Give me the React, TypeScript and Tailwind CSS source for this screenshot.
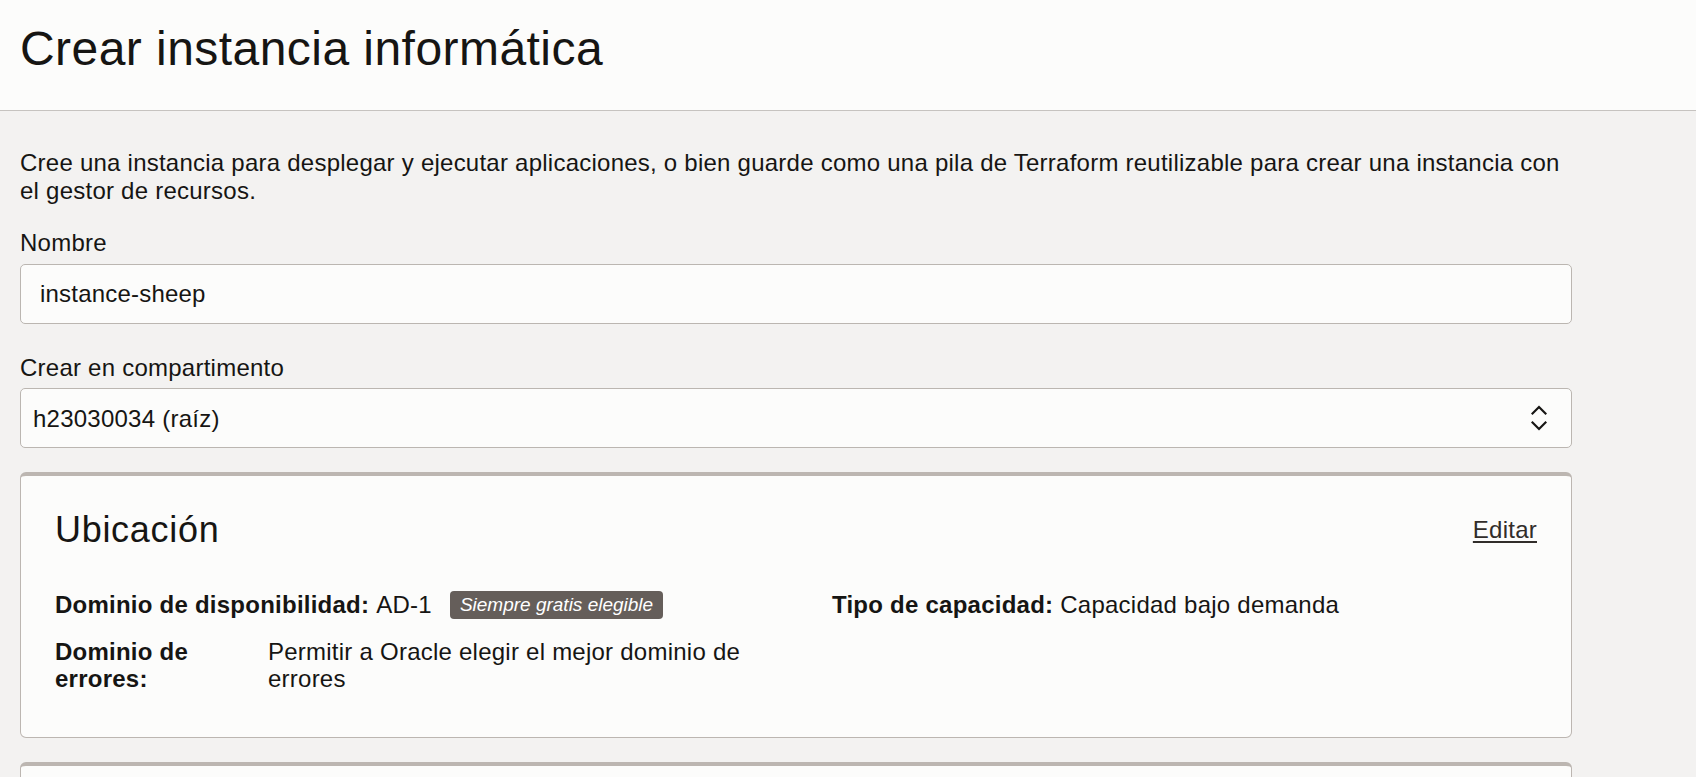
import type { ReactNode } from 'react';

const font = "font-['Liberation_Sans',Arial,sans-serif]";

function UpDownIcon() {
  return (
    <svg width="16" height="26" viewBox="0 0 16 26" fill="none" stroke="#161513" strokeWidth="2.2" strokeLinecap="square">
      <path d="M1.5 8.5 L8 2 L14.5 8.5" />
      <path d="M1.5 17.5 L8 24 L14.5 17.5" />
    </svg>
  );
}

function Field({ label, children, className = '' }: { label: string; children: ReactNode; className?: string }) {
  return (
    <div className={className}>
      <label className="block mb-[7px] text-[24px] leading-[27.6px]">{label}</label>
      {children}
    </div>
  );
}

export default function App() {
  return (
    <div className={`h-screen overflow-hidden bg-[#f3f2f1] text-[#161513] tracking-[0.24px] ${font}`}>
      {/* Header */}
      <header className="h-[111px] bg-[#fcfcfb] border-b border-[#c6c3c0] pt-[20px] px-[20px]">
        <h1 className="text-[48px] leading-[57.6px] font-normal tracking-[0.45px]">Crear instancia informática</h1>
      </header>

      <main className="pl-[20px] pr-[124px] pt-[38px]">
        <p className="text-[24px] leading-[27.6px]">
          Cree una instancia para desplegar y ejecutar aplicaciones, o bien guarde como una pila de Terraform reutilizable para crear una instancia con el gestor de recursos.
        </p>

        <Field label="Nombre" className="mt-[25px]">
          <input
            defaultValue="instance-sheep"
            readOnly
            className="block w-full h-[60px] rounded-[5px] border border-[#bbb6b1] bg-[#fcfcfb] pl-[19px] text-[24px] tracking-[0.2px] outline-none"
          />
        </Field>

        <Field label="Crear en compartimento" className="mt-[30px]">
          <div className="flex items-center justify-between h-[60px] rounded-[5px] border border-[#bbb6b1] bg-[#fcfcfb] pl-[12px] pr-[24px] text-[24px] leading-[27.6px]">
            <span>h23030034 (raíz)</span>
            <UpDownIcon />
          </div>
        </Field>

        {/* Ubicación */}
        <section className="mt-[24px] rounded-[6px] border border-t-4 border-[#bcb6b1] bg-[#fcfcfb] px-[34px] pt-[32px] pb-[44px]">
          <div className="flex items-center justify-between">
            <h2 className="text-[36px] leading-[43.2px] font-normal tracking-[0.7px]">Ubicación</h2>
            <a href="#" className="text-[24px] leading-[27.6px] text-[#312d2a] underline underline-offset-[3px]">Editar</a>
          </div>

          <div className="mt-[39px] grid grid-cols-2 gap-x-[72px] text-[24px] leading-[27.6px]">
            <div className="flex flex-col gap-[19px]">
              <div className="flex items-center h-[28px]">
                <span className="font-bold">Dominio de disponibilidad:</span>
                <span className="ml-[7px]">AD-1</span>
                <span className="ml-[18px] inline-flex items-center h-[28px] rounded-[4px] bg-[#655e5a] px-[10px] text-[19px] italic text-white tracking-normal">
                  Siempre gratis elegible
                </span>
              </div>
              <div className="grid grid-cols-[192px_1fr] gap-x-[21px]">
                <span className="font-bold">Dominio de errores:</span>
                <span>Permitir a Oracle elegir el mejor dominio de errores</span>
              </div>
            </div>
            <div>
              <div className="flex items-center h-[28px]">
                <span className="font-bold">Tipo de capacidad:</span>
                <span className="ml-[7px]">Capacidad bajo demanda</span>
              </div>
            </div>
          </div>
        </section>

        <section className="mt-[24px] h-[240px] rounded-[6px] border border-t-4 border-[#bcb6b1] bg-[#fcfcfb]" />
      </main>
    </div>
  );
}
